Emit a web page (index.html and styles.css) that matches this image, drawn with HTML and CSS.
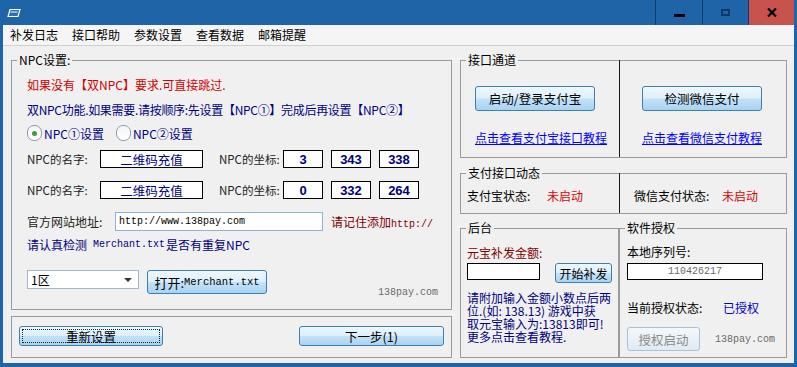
FILE: index.html
```html
<!DOCTYPE html>
<html lang="zh-CN">
<head>
    <meta charset="UTF-8">
    <title>补发工具</title>
    <link rel="stylesheet" href="styles.css">
</head>
<body>
<div class="window">
    <div class="titlebar">
        <svg class="app-icon" width="14" height="10" viewBox="0 0 14 10">
            <path d="M3 1.5 H13 L11 8.5 H1 Z" fill="#2f6fb0" stroke="#ffffff" stroke-width="1.2"/>
            <path d="M3.5 4 H10.5" stroke="#ffffff" stroke-width="1"/>
        </svg>
        <div class="caption-buttons">
            <div class="cap-btn cap-min"><span></span></div>
            <div class="cap-btn cap-max"><span></span></div>
            <div class="cap-btn cap-close">
                <svg width="10" height="9" viewBox="0 0 10 9"><path d="M1 0.5 L9 8.5 M9 0.5 L1 8.5" stroke="#000" stroke-width="2.2"/></svg>
            </div>
        </div>
    </div>

    <div class="client">
        <div class="menubar">
            <span class="menu-item">补发日志</span>
            <span class="menu-item">接口帮助</span>
            <span class="menu-item">参数设置</span>
            <span class="menu-item">查看数据</span>
            <span class="menu-item">邮箱提醒</span>
        </div>

        <div class="content">
            <!-- 左边 NPC 设置 -->
            <div class="left-col">
                <fieldset class="group npc-group">
                    <legend>NPC设置:</legend>
                    <div class="npc-body">
                        <div class="row line-red">如果没有【双NPC】要求.可直接跳过.</div>
                        <div class="row line-blue">双NPC功能.如果需要.请按顺序:先设置【NPC①】完成后再设置【NPC②】</div>
                        <div class="row radios">
                            <span class="radio checked"><i></i></span><span class="radio-label">NPC①设置</span>
                            <span class="radio radio2"><i></i></span><span class="radio-label">NPC②设置</span>
                        </div>
                        <div class="row npc-row">
                            <span class="npc-label">NPC的名字:</span>
                            <span class="box name-box">二维码充值</span>
                            <span class="npc-label coord-label">NPC的坐标:</span>
                            <span class="box num-box">3</span>
                            <span class="box num-box">343</span>
                            <span class="box num-box">338</span>
                        </div>
                        <div class="row npc-row npc-row2">
                            <span class="npc-label">NPC的名字:</span>
                            <span class="box name-box">二维码充值</span>
                            <span class="npc-label coord-label">NPC的坐标:</span>
                            <span class="box num-box">0</span>
                            <span class="box num-box">332</span>
                            <span class="box num-box">264</span>
                        </div>
                        <div class="row site-row">
                            <span class="site-label">官方网站地址:</span>
                            <span class="site-input">http://www.138pay.com</span>
                            <span class="site-warn">请记住添加<span class="mono">http://</span></span>
                        </div>
                        <div class="row check-line">请认真检测<span class="mono">&nbsp;Merchant.txt</span>是否有重复NPC</div>
                        <div class="row combo-row">
                            <span class="combo">1区<span class="combo-arrow"></span></span>
                            <span class="btn open-btn">打开:<span class="mono">Merchant.txt</span></span>
                            <span class="watermark">138pay.com</span>
                        </div>
                    </div>
                </fieldset>

                <div class="group action-group">
                    <span class="btn action-btn focused"><span>重新设置</span></span>
                    <span class="btn action-btn next-btn">下一步(1)</span>
                </div>
            </div>

            <!-- 右边 -->
            <div class="right-col">
                <fieldset class="group channel-group">
                    <legend>接口通道</legend>
                    <div class="cells">
                        <div class="cell cell-left">
                            <span class="btn pay-btn">启动/登录支付宝</span>
                            <a class="help-link">点击查看支付宝接口教程</a>
                        </div>
                        <div class="cell cell-right">
                            <span class="btn pay-btn">检测微信支付</span>
                            <a class="help-link">点击查看微信支付教程</a>
                        </div>
                    </div>
                </fieldset>

                <fieldset class="group status-group">
                    <legend>支付接口动态</legend>
                    <div class="cells">
                        <div class="cell cell-left">
                            <span class="status-label">支付宝状态:</span><span class="status-off">未启动</span>
                        </div>
                        <div class="cell cell-right">
                            <span class="status-label wx-label">微信支付状态:</span><span class="status-off">未启动</span>
                        </div>
                    </div>
                </fieldset>

                <div class="bottom-row">
                    <fieldset class="group backend-group">
                        <legend>后台</legend>
                        <div class="backend-body">
                            <div class="amount-label">元宝补发金额:</div>
                            <div class="amount-row">
                                <span class="amount-input"></span>
                                <span class="btn start-btn">开始补发</span>
                            </div>
                            <div class="amount-tip">请附加输入金额小数点后两<br>位.(如: 138.13) 游戏中获<br>取元宝输入为:13813即可!<br>更多点击查看教程.</div>
                        </div>
                    </fieldset>

                    <fieldset class="group license-group">
                        <legend>软件授权</legend>
                        <div class="license-body">
                            <div class="serial-label">本地序列号:</div>
                            <div class="serial-input">110426217</div>
                            <div class="license-state">
                                <span class="state-label">当前授权状态:</span><span class="state-ok">已授权</span>
                            </div>
                            <div class="license-foot">
                                <span class="btn btn-disabled">授权启动</span>
                                <span class="watermark">138pay.com</span>
                            </div>
                        </div>
                    </fieldset>
                </div>
            </div>
        </div>
    </div>
</div>
</body>
</html>
```

FILE: styles.css
```css
* {
    box-sizing: border-box;
}

body {
    margin: 0;
    background: #1e64a6;
    font-family: "Noto Sans CJK SC", "Noto Sans", sans-serif;
    font-size: 12px;
    color: #000;
}

.window {
    width: 797px;
    height: 367px;
    background: #1e64a6;
    display: flex;
    flex-direction: column;
    overflow: hidden;
}

/* 标题栏 */
.titlebar {
    height: 25px;
    display: flex;
    align-items: center;
    padding-left: 7px;
}

.app-icon {
    display: block;
    margin-top: 1px;
}

.caption-buttons {
    margin-left: auto;
    margin-right: 3px;
    display: flex;
    height: 25px;
}

.cap-btn {
    width: 46px;
    height: 25px;
    display: flex;
    align-items: center;
    justify-content: center;
    border-left: 1px solid #0e3c6a;
}

.cap-min {
    width: 47px;
}

.cap-min span {
    width: 11px;
    height: 3px;
    background: #000;
    margin-top: 5px;
}

.cap-max span {
    width: 9px;
    height: 7px;
    border: 2px solid #0c3a68;
    margin-top: -1px;
}

.cap-close {
    background: #c8534c;
    border-left: 1px solid #0e3c6a;
}

.cap-close svg {
    display: block;
}

/* 客户区 */
.client {
    flex: 1;
    margin: 0 3px 4px 3px;
    background: #f0f0f0;
    display: flex;
    flex-direction: column;
}

.menubar {
    height: 21px;
    background: #f5f5f5;
    border-bottom: 1px solid #d0d0d0;
    display: flex;
    align-items: center;
}

.menu-item {
    padding: 0 7px;
    line-height: 20px;
}

.content {
    flex: 1;
    display: flex;
    gap: 8px;
    padding: 6px 7px 0 8px;
}

.group {
    margin: 0;
    padding: 0;
    min-width: 0;
    border: 1px solid #9a9a9a;
}

.group legend {
    margin-left: 5px;
    padding: 0 2px;
    font-size: 12px;
    line-height: 16px;
    color: #000;
}

.mono {
    font-family: "Liberation Mono", monospace;
}

/* 左列 */
.left-col {
    width: 441px;
    display: flex;
    flex-direction: column;
    gap: 6px;
}

.npc-group {
    height: 258px;
}

.npc-body {
    padding: 6px 13px 0 15px;
}

.row {
    display: flex;
    align-items: center;
}

.line-red {
    height: 20px;
    color: #d40000;
    font-size: 12px;
}

.line-blue {
    height: 20px;
    margin-top: 5px;
    color: #000080;
    font-size: 12px;
    letter-spacing: -0.3px;
}

.radios {
    height: 20px;
    margin-top: 4px;
    color: #000080;
    font-size: 12px;
}

.radio {
    width: 15px;
    height: 16px;
    border: 1px solid #8c9db3;
    border-radius: 7px;
    background: linear-gradient(#f4f4f4, #ffffff);
    display: flex;
    align-items: center;
    justify-content: center;
}

.radio.checked i {
    width: 5px;
    height: 5px;
    border-radius: 50%;
    background: #3d9a3d;
}

.radio-label {
    margin-left: 2px;
}

.radio2 {
    margin-left: 12px;
}

.npc-row {
    height: 18px;
    margin-top: 7px;
}

.npc-row2 {
    margin-top: 13px;
}

.npc-label {
    width: 73px;
    font-size: 11.5px;
    color: #222;
}

.coord-label {
    width: 64px;
    margin-left: 16px;
}

.box {
    height: 18px;
    border: 1px solid #000;
    background: #fff;
    display: flex;
    align-items: center;
    justify-content: center;
    color: #000080;
}

.name-box {
    width: 103px;
    font-size: 12.5px;
}

.num-box {
    width: 40px;
    margin-right: 8px;
    font-weight: bold;
    font-size: 13px;
    font-family: "Liberation Sans", sans-serif;
}

.site-row {
    height: 19px;
    margin-top: 13px;
}

.site-label {
    width: 88px;
    font-size: 12px;
    color: #222;
}

.site-input {
    width: 208px;
    height: 19px;
    border: 1px solid #8fb2dc;
    background: #fff;
    padding-left: 3px;
    font-family: "Liberation Mono", monospace;
    font-size: 10px;
    line-height: 18px;
}

.site-warn {
    margin-left: 8px;
    color: #800000;
    font-size: 12px;
}

.site-warn .mono {
    font-size: 10px;
}

.check-line {
    height: 18px;
    margin-top: 4px;
    color: #000080;
    font-size: 12px;
}

.check-line .mono {
    font-size: 10px;
    margin-right: 1px;
}

.combo-row {
    height: 24px;
    margin-top: 17px;
    align-items: flex-start;
}

.combo {
    width: 112px;
    height: 19px;
    border: 1px solid #a3b6cf;
    background: #fff;
    padding-left: 3px;
    font-size: 12px;
    line-height: 17px;
    display: flex;
    align-items: center;
}

.combo-arrow {
    margin-left: auto;
    margin-right: 6px;
    width: 0;
    height: 0;
    border-left: 4px solid transparent;
    border-right: 4px solid transparent;
    border-top: 4px solid #333;
}

.btn {
    display: flex;
    align-items: center;
    justify-content: center;
    border: 1px solid #3c7fb1;
    border-radius: 3px;
    background: linear-gradient(#eef7fd 0%, #dcf0fc 48%, #c2e2f8 52%, #a9d3f2 100%);
    font-size: 12px;
    color: #000;
}

.open-btn {
    width: 120px;
    height: 24px;
    margin-left: 8px;
    font-size: 13px;
}

.open-btn .mono {
    font-size: 10.5px;
}

.watermark {
    margin-left: auto;
    margin-top: 17px;
    font-family: "Liberation Mono", monospace;
    font-size: 10px;
    color: #6a6a6a;
}

.action-group {
    height: 42px;
    display: flex;
    justify-content: space-between;
    padding: 9px 7px 0 7px;
}

.action-btn {
    width: 144px;
    height: 20px;
    font-size: 12.5px;
}

.action-btn.focused span {
    width: 138px;
    height: 14px;
    border: 1px dotted #222;
    display: flex;
    align-items: center;
    justify-content: center;
}

.next-btn {
    width: 145px;
}

/* 右列 */
.right-col {
    width: 327px;
    display: flex;
    flex-direction: column;
}

.cells {
    display: flex;
    margin-top: -8px;
}

.cell {
    display: flex;
    flex-direction: column;
}

.cell-left {
    width: 158px;
}

.cell-right {
    flex: 1;
    border-left: 1px solid #1a1a1a;
}

.channel-group {
    height: 106px;
}

.channel-group .cells {
    height: 97px;
}

.channel-group .cell-left {
    padding: 26px 0 0 14px;
}

.channel-group .cell-right {
    padding: 26px 0 0 22px;
}

.pay-btn {
    width: 120px;
    height: 25px;
    font-size: 12.5px;
}

.help-link {
    margin-top: 19px;
    line-height: 16px;
    font-size: 12px;
    color: #0000ff;
    text-decoration: underline;
    white-space: nowrap;
}

.status-group {
    height: 49px;
    margin-top: 7px;
}

.status-group .cells {
    height: 40px;
}

.status-group .cell {
    flex-direction: row;
    align-items: center;
    padding-top: 4px;
}

.status-group .cell-left {
    padding-left: 6px;
}

.status-label {
    width: 80px;
    font-size: 12px;
}

.wx-label {
    width: 88px;
    margin-left: 14px;
}

.status-off {
    color: #e00000;
    font-size: 12px;
}

.bottom-row {
    display: flex;
    margin-top: 6px;
}

.backend-group {
    width: 159px;
    height: 138px;
}

.license-group {
    width: 168px;
    height: 138px;
}

.backend-body {
    padding: 9px 0 0 6px;
}

.amount-label {
    line-height: 16px;
    color: #800000;
    font-size: 12px;
}

.amount-row {
    display: flex;
    align-items: flex-start;
    margin-top: 2px;
}

.amount-input {
    width: 73px;
    height: 17px;
    border: 1px solid #000;
    background: #fff;
}

.start-btn {
    width: 57px;
    height: 20px;
    margin-left: 15px;
    font-size: 12px;
}

.amount-tip {
    margin-top: 8px;
    font-size: 12px;
    line-height: 13px;
    color: #000080;
    white-space: nowrap;
}

.license-body {
    padding: 8px 0 0 7px;
}

.serial-label {
    line-height: 16px;
    font-size: 12px;
}

.serial-input {
    width: 136px;
    height: 17px;
    margin-top: 3px;
    border: 1px solid #000;
    background: #fff;
    text-align: center;
    font-family: "Liberation Mono", monospace;
    font-size: 10px;
    line-height: 15px;
    color: #6a6a6a;
}

.license-state {
    display: flex;
    margin-top: 20px;
    line-height: 16px;
    font-size: 12px;
}

.state-label {
    width: 96px;
}

.state-ok {
    color: #0000cc;
}

.license-foot {
    display: flex;
    align-items: flex-start;
    margin-top: 11px;
}

.btn-disabled {
    width: 73px;
    height: 24px;
    border-color: #a9c2d8;
    background: linear-gradient(#f4f8fb, #dfeaf4);
    color: #8a8a8a;
    font-size: 12.5px;
}

.license-foot .watermark {
    margin-left: 15px;
    margin-top: 7px;
}
```
